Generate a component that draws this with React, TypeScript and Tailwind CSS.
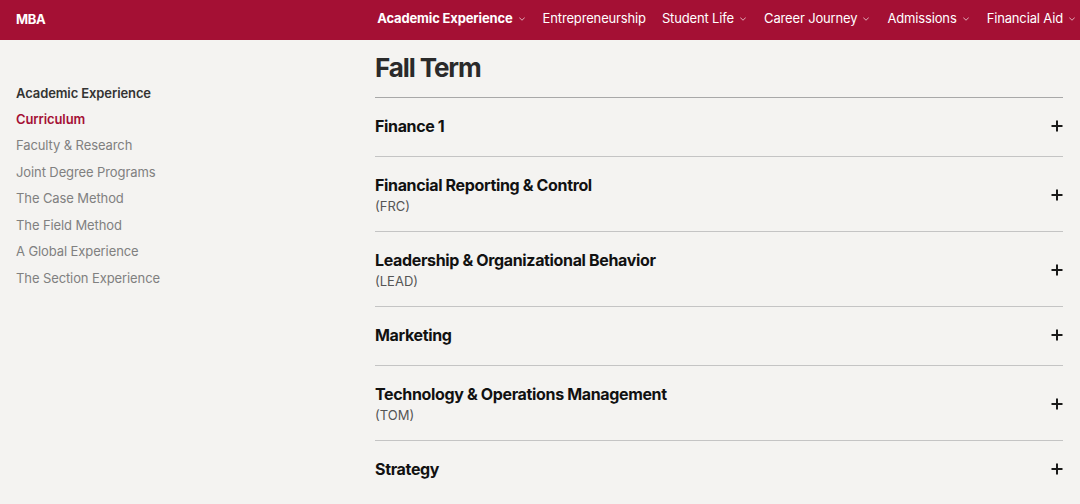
import { ChevronDown } from 'lucide-react'

const NAV = [
  { label: 'Academic Experience', menu: true, active: true },
  { label: 'Entrepreneurship', menu: false },
  { label: 'Student Life', menu: true },
  { label: 'Career Journey', menu: true },
  { label: 'Admissions', menu: true },
  { label: 'Financial Aid', menu: true },
]

const SIDE = [
  'Faculty & Research',
  'Joint Degree Programs',
  'The Case Method',
  'The Field Method',
  'A Global Experience',
  'The Section Experience',
]

const COURSES: { title: string; code?: string }[] = [
  { title: 'Finance 1' },
  { title: 'Financial Reporting & Control', code: '(FRC)' },
  { title: 'Leadership & Organizational Behavior', code: '(LEAD)' },
  { title: 'Marketing' },
  { title: 'Technology & Operations Management', code: '(TOM)' },
  { title: 'Strategy' },
]

function Plus() {
  return (
    <svg width="12" height="12" viewBox="0 0 12 12" className="text-[#1a1a1a]">
      <path d="M6 0.5v11M0.5 6h11" stroke="currentColor" strokeWidth="2" />
    </svg>
  )
}

export default function App() {
  return (
    <div className="min-h-screen bg-[#f4f3f1] font-['Inter',sans-serif] text-[#111]">
      {/* Top bar */}
      <div className="h-10 bg-[#a41034] flex items-center justify-between pl-4 pr-[3px] pb-[3px] text-white">
        <div className="text-[13px] font-bold tracking-tight pt-[3px]">MBA</div>
        <div className="flex items-center gap-[16px] text-[13px] tracking-[-0.15px]">
          {NAV.map(n => (
            <div key={n.label} className={`flex items-center gap-[4px] ${n.active ? 'font-bold' : ''}`}>
              <span>{n.label}</span>
              {n.menu && <ChevronDown className="w-[10px] h-[10px] opacity-80" strokeWidth={2} />}
            </div>
          ))}
        </div>
      </div>

      <div className="flex">
        {/* Sidebar */}
        <div className="w-[375px] pl-4 pt-[40px] text-[13px] tracking-[-0.1px]">
          <div className="font-semibold text-[#333] leading-[26px]">Academic Experience</div>
          <div className="font-semibold text-[#a41034] leading-[26px]">Curriculum</div>
          {SIDE.map(s => (
            <div key={s} className="text-[#808080] leading-[26.5px]">{s}</div>
          ))}
        </div>

        {/* Content */}
        <div className="w-[688px]">
          <h1 className="text-[26px] font-bold tracking-[-1.1px] text-[#2a2a2a] leading-[34px] pt-[11px] pb-[12px]">Fall Term</h1>
          <div>
            {COURSES.map((c, i) => (
              <div
                key={c.title}
                className={`flex items-center justify-between border-t ${i === 0 ? 'border-[#a8a8a8]' : 'border-[#c4c4c4]'} pt-[18px] ${c.code ? 'pb-[17px]' : 'pb-[20px]'}`}
              >
                <div>
                  <div className="text-[16px] font-bold leading-5 tracking-[-0.35px]">{c.title}</div>
                  {c.code && <div className="text-[13px] text-[#555] leading-4 mt-[3px]">{c.code}</div>}
                </div>
                <Plus />
              </div>
            ))}
          </div>
        </div>
      </div>
    </div>
  )
}
